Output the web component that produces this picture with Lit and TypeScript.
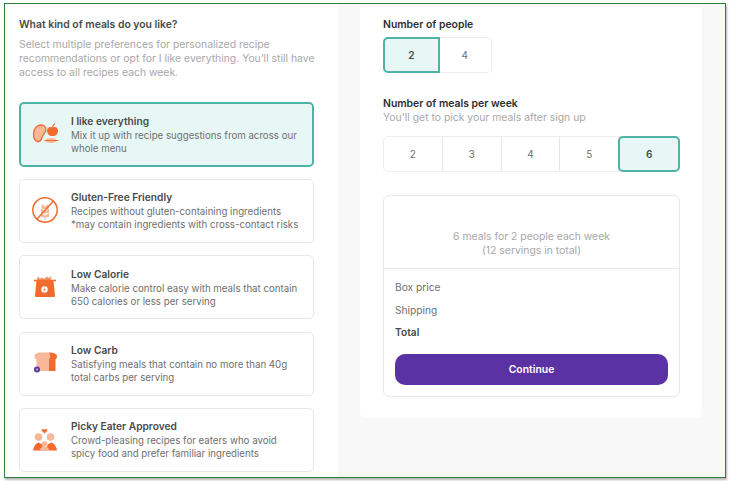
import { LitElement, html, css, svg } from 'lit';
import { customElement } from 'lit/decorators.js';

const ORANGE = '#f26b2e';
const PEACH = '#f9b79a';

const icons = {
    everything: svg`
      <path d="M1.500 14c0-5.500 3.500-9 7.500-9 3.500 0 5.500 2.500 4.800 5.500-.6 2.500-2.600 3.500-3.400 6-.7 2.500-2.200 5.500-4.900 5-2.500-.5-4-4-4-7.500z" fill="${PEACH}" stroke="${ORANGE}" stroke-width="1.300"/>
      <path d="M20.500 7.500c3-1.500 5.500.5 5.500 3.200 0 3-2 5.300-5.500 5.300s-5.500-2.300-5.500-5.300c0-2.700 2.500-4.700 5.500-3.200z" fill="${ORANGE}"/>
      <path d="M20.500 7.500c.2-1.500 1-3 2.500-4" fill="none" stroke="${ORANGE}" stroke-width="1.200"/>
      <ellipse cx="19" cy="20.500" rx="5.500" ry="2.400" fill="${PEACH}"/>
      <path d="M12.500 20.500h14" stroke="${ORANGE}" stroke-width="1"/>`,
    gluten: svg`
      <circle cx="13" cy="13" r="12.200" fill="none" stroke="${ORANGE}" stroke-width="1.500"/>
      <path d="M13 23V8M13 11l-3-3.500v4zM13 11l3-3.500v4zM13 15.500l-3.500-3.500v3.500zM13 15.500l3.500-3.500v3.500zM13 20l-3.500-3.500v3zM13 20l3.500-3.500v3z" fill="${PEACH}" stroke="${PEACH}" stroke-width="1"/>
      <path d="M21.500 4L5 22" stroke="${ORANGE}" stroke-width="1.500"/>`,
    scale: svg`
      <path d="M5 7.500l.5-4 2.500 2 2-1 2 1.500 3-2.500 1.500 1.500 3-2-1 4.500z" fill="#f59468"/>
      <path d="M2 7.500h22" stroke="${ORANGE}" stroke-width="1.600"/>
      <path d="M4.500 8h17l1.500 14.500c0 1-.5 1.500-1.500 1.500h-17C3.500 24 3 23.500 3 22.500z" fill="${ORANGE}"/>
      <circle cx="12.500" cy="16.500" r="3.200" fill="#fff"/>
      <circle cx="12.500" cy="16.500" r="1" fill="${ORANGE}"/>`,
    bread: svg`
      <path d="M2.500 6.500C2.500 3.500 5.500 2.500 9 2.500h9v18.500H4.500V9.500C3.300 9 2.500 8 2.500 6.500z" fill="${PEACH}"/>
      <path d="M17 2.500c4 0 8 1 8 4 0 1.500-.8 2.500-1.500 3V21H17V9.500c1.500-1.500 1.500-5 0-7z" fill="${ORANGE}"/>
      <circle cx="5" cy="19.500" r="3" fill="#5b3a9e"/>
      <circle cx="5" cy="19.500" r="1" fill="#cdbfe8"/>`,
    picky: svg`
      <path d="M12.500 7.500l-2.500-2.600c-1.200-1.400 1-2.900 2.500-1.200 1.500-1.700 3.700-.2 2.500 1.200z" fill="${ORANGE}"/>
      <circle cx="6.500" cy="11" r="3.800" fill="${PEACH}"/>
      <circle cx="18.500" cy="11" r="3.800" fill="${PEACH}"/>
      <path d="M1 24.500c.5-4 2.500-7 5.500-8l4 2 1 6z" fill="${ORANGE}"/>
      <path d="M25 24.500c-.5-4-2.500-7-5.500-8l-4 2-1 6z" fill="${ORANGE}"/>
      <circle cx="12.500" cy="18" r="2.800" fill="${PEACH}"/>
      <path d="M7.500 25c.5-3 2.500-4.500 5-4.500s4.500 1.500 5 4.500z" fill="${PEACH}"/>`,
};

const prefs = [
    { icon: icons.everything, title: 'I like everything', lines: ['Mix it up with recipe suggestions from across our', 'whole menu'], selected: true },
    { icon: icons.gluten, title: 'Gluten-Free Friendly', lines: ['Recipes without gluten-containing ingredients', '*may contain ingredients with cross-contact risks'] },
    { icon: icons.scale, title: 'Low Calorie', lines: ['Make calorie control easy with meals that contain', '650 calories or less per serving'] },
    { icon: icons.bread, title: 'Low Carb', lines: ['Satisfying meals that contain no more than 40g', 'total carbs per serving'] },
    { icon: icons.picky, title: 'Picky Eater Approved', lines: ['Crowd-pleasing recipes for eaters who avoid', 'spicy food and prefer familiar ingredients'] },
];

@customElement('app-root')
export class AppRoot extends LitElement {
    static styles = css`
    :host {
      display: block;
      width: 730px;
      height: 481px;
      background: #fff;
      font-family: 'Inter', 'Open Sans', sans-serif;
      overflow: hidden;
      padding: 3px 0 0 4px;
      box-sizing: border-box;
    }

    .frame {
      width: 722px;
      height: 475px;
      box-sizing: border-box;
      border: 1px solid #2f7d3a;
      box-shadow: 1px 2px 2px rgba(0, 0, 0, 0.3);
      display: flex;
      overflow: hidden;
      background: #f8f8f8;
    }

    .left {
      width: 333px;
      flex: none;
      background: #fff;
      padding: 14px 0 0 14px;
      box-sizing: border-box;
    }

    .heading {
      font-size: 10.4px;
      font-weight: 600;
      line-height: 14px;
      color: #4a4a4a;
    }

    .intro {
      margin-top: 6px;
      font-size: 10.4px;
      line-height: 14.2px;
      color: #a8a8a8;
      white-space: nowrap;
    }

    .cards {
      margin-top: 21px;
      width: 295px;
      display: flex;
      flex-direction: column;
      gap: 12.3px;
    }

    .card {
      height: 64px;
      box-sizing: border-box;
      border: 1px solid #e8e8e8;
      border-radius: 5px;
      display: flex;
      align-items: center;
      padding-left: 12px;
      gap: 11px;
    }

    .card.selected {
      height: 65px;
      border: 2px solid #4fb3a6;
      background: #e7f7f5;
      padding-left: 11px;
    }

    .card svg {
      width: 28px;
      height: 28px;
      flex: none;
    }

    .card-title {
      font-size: 10.2px;
      font-weight: 600;
      line-height: 14px;
      color: #4a4a4a;
      margin-bottom: 1px;
    }

    .card-line {
      font-size: 9.7px;
      line-height: 13px;
      color: #6f6f6f;
      white-space: nowrap;
    }

    .right {
      flex: none;
      margin: 3px 0 0 22px;
      width: 342px;
      height: 411px;
      background: #fff;
      border-radius: 0 0 6px 6px;
      padding: 11px 22px 0 23px;
      box-sizing: border-box;
    }

    .label {
      font-size: 10.4px;
      font-weight: 600;
      line-height: 14px;
      color: #2f2f2f;
    }

    .sub {
      font-size: 10.4px;
      line-height: 14px;
      color: #a8a8a8;
    }

    .options {
      display: flex;
      border: 1px solid #ededed;
      border-radius: 5px;
      height: 36px;
      box-sizing: border-box;
      margin-top: 5px;
    }

    .people {
      width: 109px;
    }

    .meals {
      margin-top: 11px;
      width: 297px;
    }

    .option {
      flex: 1;
      display: flex;
      align-items: center;
      justify-content: center;
      font-size: 10px;
      color: #6f6f6f;
      border-right: 1px solid #e6e6e6;
    }

    .option:last-child {
      border-right: none;
    }

    .option.selected {
      margin: -1px;
      border: 2px solid #4fb3a6;
      border-radius: 5px;
      background: #e7f7f5;
      font-weight: 600;
      color: #4a4a4a;
    }

    .people .option {
      border-right: none;
    }

    .people .option.selected {
      border: 2px solid #4fb3a6;
      border-radius: 5px 0 0 5px;
    }

    .meals-head {
      margin-top: 24px;
    }

    .summary {
      margin-top: 23px;
      width: 297px;
      height: 202px;
      box-sizing: border-box;
      border: 1px solid #e8e8e8;
      border-radius: 6px;
    }

    .blurb {
      height: 73px;
      box-sizing: border-box;
      border-bottom: 1px solid #e8e8e8;
      padding-top: 34px;
      text-align: center;
      font-size: 10.4px;
      line-height: 14.2px;
      color: #a8a8a8;
    }

    .rows {
      padding: 11px 12px 0 11px;
      display: flex;
      flex-direction: column;
      gap: 8.7px;
      font-size: 10.2px;
      line-height: 14px;
      color: #6f6f6f;
    }

    .total {
      font-weight: 600;
      color: #4a4a4a;
    }

    .continue {
      display: block;
      margin: 15px 12px 0 11px;
      width: 273px;
      height: 31px;
      border: none;
      border-radius: 10px;
      background: #5a32a3;
      color: #fff;
      font: 600 10.4px 'Inter', sans-serif;
    }
  `;

    render() {
        return html`
      <div class="frame">
        <div class="left">
          <div class="heading">What kind of meals do you like?</div>
          <div class="intro">
            Select multiple preferences for personalized recipe<br />
            recommendations or opt for I like everything. You’ll still have<br />
            access to all recipes each week.
          </div>
          <div class="cards">
            ${prefs.map(
                (p) => html`
                <div class="card ${p.selected ? 'selected' : ''}">
                  <svg viewBox="0 0 28 28">${p.icon}</svg>
                  <div>
                    <div class="card-title">${p.title}</div>
                    ${p.lines.map((l) => html`<div class="card-line">${l}</div>`)}
                  </div>
                </div>
              `
            )}
          </div>
        </div>
        <div class="right">
          <div class="label">Number of people</div>
          <div class="options people">
            <div class="option selected">2</div>
            <div class="option">4</div>
          </div>
          <div class="meals-head">
            <div class="label">Number of meals per week</div>
            <div class="sub">You'll get to pick your meals after sign up</div>
          </div>
          <div class="options meals">
            ${[2, 3, 4, 5, 6].map((n) => html`<div class="option ${n === 6 ? 'selected' : ''}">${n}</div>`)}
          </div>
          <div class="summary">
            <div class="blurb">6 meals for 2 people each week<br />(12 servings in total)</div>
            <div class="rows">
              <div>Box price</div>
              <div>Shipping</div>
              <div class="total">Total</div>
            </div>
            <button class="continue">Continue</button>
          </div>
        </div>
      </div>
    `;
    }
}
